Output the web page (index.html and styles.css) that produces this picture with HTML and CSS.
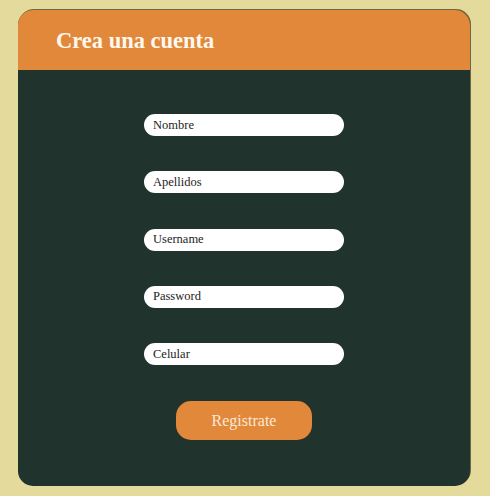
FILE: index.html
```html
<!DOCTYPE html>
<html lang="es">
<head>
<meta charset="utf-8">
<title>Crea una cuenta</title>
<link rel="stylesheet" href="styles.css">
</head>
<body>
<div class="card">
  <header class="card-header">
    <h1 class="title">Crea una cuenta</h1>
  </header>
  <form class="form">
    <input class="field" type="text" placeholder="Nombre">
    <input class="field" type="text" placeholder="Apellidos">
    <input class="field" type="text" placeholder="Username">
    <input class="field" type="password" placeholder="Password">
    <input class="field" type="text" placeholder="Celular">
    <button class="submit" type="button">Registrate</button>
  </form>
</div>
</body>
</html>
```
FILE: styles.css
```css
html, body {
  margin: 0;
  padding: 0;
}
body {
  background: #e3da9b;
  width: 490px;
  height: 496px;
  padding-top: 10px;
  box-sizing: border-box;
  font-family: "Liberation Serif", "DejaVu Serif", serif;
}
.card {
  margin-left: 18px;
  width: 452px;
  height: 476px;
  border-radius: 15px;
  overflow: hidden;
  background: #20332c;
  box-shadow: 1px -1px 0 #6b6a45;
  display: flex;
  flex-direction: column;
}
.card-header {
  height: 60px;
  background: #e2883a;
  display: flex;
  align-items: center;
  padding-left: 38px;
  flex-shrink: 0;
}
.title {
  margin: 0;
  color: #fff8ee;
  font-size: 22.5px;
  font-weight: bold;
  padding-top: 1px;
}
.form {
  display: flex;
  flex-direction: column;
  align-items: center;
  padding-top: 44px;
  gap: 35.3px;
}
.field {
  width: 200px;
  height: 22px;
  box-sizing: border-box;
  border: none;
  border-radius: 11px;
  background: #ffffff;
  padding: 0 9px;
  font-family: "Liberation Serif", "DejaVu Serif", serif;
  font-size: 12.5px;
  outline: none;
}
.field::placeholder {
  color: #1d1d1d;
  opacity: 1;
}
.submit {
  margin-top: 1px;
  width: 136px;
  height: 39px;
  border: none;
  border-radius: 15px;
  background: #e2883a;
  color: #fbe9d2;
  font-family: "Liberation Serif", "DejaVu Serif", serif;
  font-size: 16px;
  cursor: pointer;
}
```
